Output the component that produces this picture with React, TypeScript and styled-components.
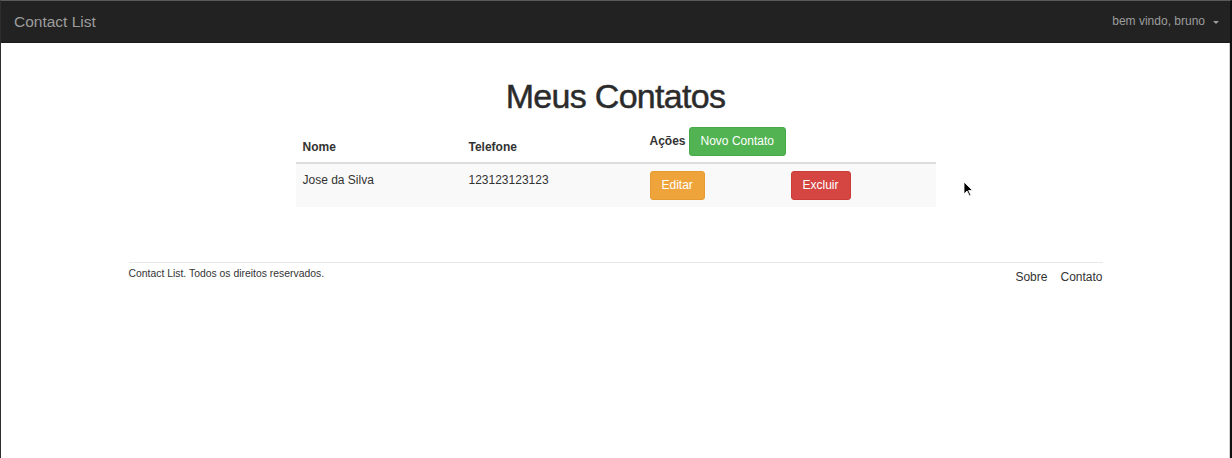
import React from "react";
import styled, { createGlobalStyle } from "styled-components";

const Global = createGlobalStyle`
  html, body { margin: 0; padding: 0; background: #ffffff; }
  body { font-family: "Liberation Sans", Arial, sans-serif; color: #333333; }
  * { box-sizing: border-box; }
`;

const Frame = styled.div`
  position: relative;
  width: 1232px;
  height: 458px;
  overflow: hidden;
  border-top: 1px solid #5a5a5a;
  border-left: 1px solid #2e2e2e;
  border-right: 2px solid #101010;
  box-shadow: inset -1px 0 0 #d4d4d4;
  background: #ffffff;
  display: flex;
  flex-direction: column;
`;

const Navbar = styled.header`
  height: 42px;
  background: #222222;
  border-bottom: 1px solid #1a1a1a;
  display: flex;
  align-items: center;
  justify-content: space-between;
  padding: 0 11px 0 13px;
`;

const Brand = styled.a`
  font-size: 15.5px;
  color: #9d9d9d;
  text-decoration: none;
  line-height: 20px;
`;

const UserMenu = styled.a`
  display: flex;
  align-items: center;
  gap: 8px;
  font-size: 12px;
  color: #9d9d9d;
  text-decoration: none;
  line-height: 17px;
`;

const Caret = styled.span`
  width: 0;
  height: 0;
  border-left: 3px solid transparent;
  border-right: 3px solid transparent;
  border-top: 3px solid #9d9d9d;
  margin-top: 1px;
`;

const Main = styled.main`
  display: flex;
  flex-direction: column;
  align-items: center;
  padding-top: 35px;
`;

const Title = styled.h1`
  margin: 0;
  font-size: 34px;
  font-weight: 500;
  letter-spacing: -0.7px;
  line-height: 37px;
  color: #2b2b2b;
  -webkit-text-stroke: 0.45px #2b2b2b;
`;

const Table = styled.div`
  width: 640px;
  margin-top: 4px;
  display: grid;
  grid-template-columns: 166px 181px 141px 152px;
  font-size: 12px;
  line-height: 17px;
`;

const HeadRow = styled.div`
  display: contents;
`;

const Th = styled.div<{ $span?: number }>`
  grid-column: span ${(p) => p.$span ?? 1};
  padding: 8px 7px 6px;
  font-weight: bold;
  color: #333;
  border-bottom: 2px solid #dddddd;
  display: flex;
  align-items: flex-end;
  white-space: nowrap;
`;

const ThActions = styled(Th)`
  align-items: baseline;
  gap: 3px;
`;

const BodyRow = styled.div`
  display: contents;
`;

const Td = styled.div<{ $text?: boolean }>`
  background: #f9f9f9;
  padding: ${(p) => (p.$text ? "8px 7px 6px" : "7px 7px 7px")};
  color: #333;
  min-height: 43px;
`;

const Button = styled.button<{ $variant: "success" | "warning" | "danger" }>`
  font-family: "Liberation Sans", Arial, sans-serif;
  font-size: 12px;
  line-height: 17px;
  color: #ffffff;
  border-radius: 3px;
  padding: 5px 11px;
  height: 29px;
  cursor: pointer;
  background: ${(p) =>
    p.$variant === "success" ? "#51b351" : p.$variant === "warning" ? "#eea43b" : "#d54541"};
  border: 1px solid
    ${(p) => (p.$variant === "success" ? "#48a948" : p.$variant === "warning" ? "#e69b30" : "#cb3c38")};
`;

const Footer = styled.footer`
  width: 974px;
  margin: 55px auto 0;
  border-top: 1px solid #e8e8e8;
  display: flex;
  justify-content: space-between;
  align-items: flex-start;
  padding-top: 4px;
`;

const Copy = styled.p`
  margin: 0;
  font-size: 10.4px;
  line-height: 14px;
  color: #333;
`;

const FooterNav = styled.nav`
  display: flex;
  gap: 13px;
  padding-top: 2px;
`;

const FooterLink = styled.a`
  font-size: 12px;
  line-height: 17px;
  color: #333;
  text-decoration: none;
`;

const Cursor = styled.svg`
  position: absolute;
  left: 962px;
  top: 180px;
`;

export default function App() {
  return (
    <>
      <Global />
      <Frame>
        <Navbar>
          <Brand href="#">Contact List</Brand>
          <UserMenu href="#">
            bem vindo, bruno <Caret />
          </UserMenu>
        </Navbar>
        <Main>
          <Title>Meus Contatos</Title>
          <Table>
            <HeadRow>
              <Th>Nome</Th>
              <Th>Telefone</Th>
              <ThActions $span={2}>
                Ações <Button $variant="success">Novo Contato</Button>
              </ThActions>
            </HeadRow>
            <BodyRow>
              <Td $text>Jose da Silva</Td>
              <Td $text>123123123123</Td>
              <Td>
                <Button $variant="warning">Editar</Button>
              </Td>
              <Td>
                <Button $variant="danger">Excluir</Button>
              </Td>
            </BodyRow>
          </Table>
        </Main>
        <Footer>
          <Copy>Contact List. Todos os direitos reservados.</Copy>
          <FooterNav>
            <FooterLink href="#">Sobre</FooterLink>
            <FooterLink href="#">Contato</FooterLink>
          </FooterNav>
        </Footer>
        <Cursor width="11" height="17" viewBox="0 0 11 17">
          <path d="M1 1 L1 13 L4 10 L6.5 15 L8 14.3 L5.6 9.5 L9.5 9.5 Z" fill="#000" stroke="#fff" strokeWidth="0.8" />
        </Cursor>
      </Frame>
    </>
  );
}
